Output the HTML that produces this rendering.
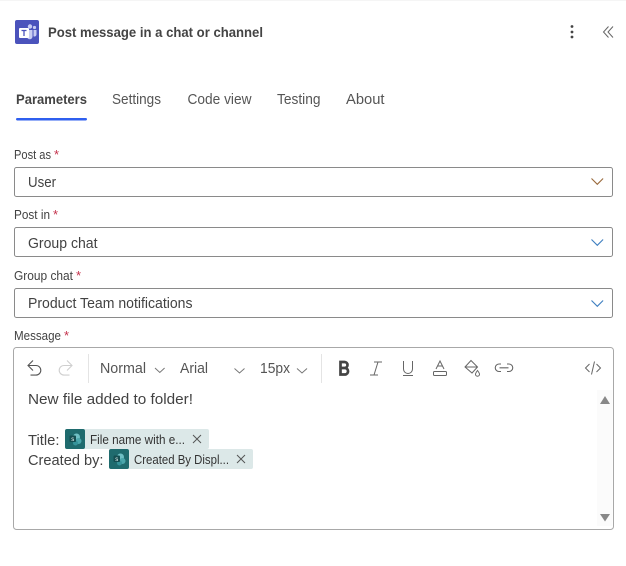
<!DOCTYPE html>
<html><head><meta charset="utf-8"><style>
html,body{margin:0;padding:0;background:#fff;width:626px;height:566px;overflow:hidden}
svg{display:block}
text{font-family:"Liberation Sans",sans-serif;fill:#424242;font-size:15px}
.l{font-size:13px;fill:#424242}.r{font-size:13px;fill:#c4314b}
.t{fill:#555}.b{font-weight:bold}
.c{font-size:12.500px;fill:#333}
</style></head><body>
<svg width="626" height="566" viewBox="0 0 626 566" xmlns="http://www.w3.org/2000/svg">
<rect width="626" height="1" fill="#f5f5f5"/>
<rect x="15" y="20" width="24" height="24" rx="2" fill="#4b53bc"/>
<g fill="#c9cdf2"><circle cx="30" cy="26.500" r="2.200"/><circle cx="34.500" cy="27.500" r="1.600"/><path d="M27 30h5.500v6.500a2.700 2.700 0 0 1-5.500 0zM33.500 30h3v4.500a2 2 0 0 1-3 1.700z"/></g>
<rect x="19" y="28" width="10" height="10" rx="1" fill="#fff"/>
<path d="M21.500 30.500h5M24 30.500v5.500" stroke="#4b53bc" stroke-width="1.300" fill="none"/>
<text x="48" y="37" class="b" style="font-size:14px;fill:#444" textLength="215" lengthAdjust="spacingAndGlyphs">Post message in a chat or channel</text>
<g fill="#444"><circle cx="572" cy="26.500" r="1.400"/><circle cx="572" cy="32" r="1.400"/><circle cx="572" cy="37" r="1.400"/></g>
<path d="M608.500 26.500L603.500 32l5 5.500M613 26.500L608 32l5 5.500" fill="none" stroke="#666" stroke-width="1"/>

<text x="16" y="104" class="b" style="font-size:14px;fill:#444" textLength="71" lengthAdjust="spacingAndGlyphs">Parameters</text>
<text x="112" y="104" class="t" textLength="49" lengthAdjust="spacingAndGlyphs">Settings</text>
<text x="187.500" y="104" class="t" textLength="64" lengthAdjust="spacingAndGlyphs">Code view</text>
<text x="277" y="104" class="t" textLength="43.500" lengthAdjust="spacingAndGlyphs">Testing</text>
<text x="346" y="104" class="t" textLength="38.500" lengthAdjust="spacingAndGlyphs">About</text>
<rect x="16" y="118" width="71" height="2.500" rx="1.200" fill="#2f5fef"/>

<text x="14" y="159" class="l" textLength="37" lengthAdjust="spacingAndGlyphs">Post as</text><text x="54" y="159" class="r">*</text>
<rect x="14.500" y="167.500" width="598" height="29" rx="2" fill="#fff" stroke="#8a8a8a"/>
<text x="28" y="187" textLength="28" lengthAdjust="spacingAndGlyphs">User</text>
<path d="M591.500 178.500l5.800 5.800 5.800-5.800" fill="none" stroke="#9a6a3c" stroke-width="1.100"/>

<text x="14" y="219" class="l" textLength="36" lengthAdjust="spacingAndGlyphs">Post in</text><text x="53" y="219" class="r">*</text>
<rect x="14.500" y="227.500" width="598" height="29" rx="2" fill="#fff" stroke="#8a8a8a"/>
<text x="28" y="248" textLength="69.500" lengthAdjust="spacingAndGlyphs">Group chat</text>
<path d="M591.500 239.500l5.800 5.800 5.800-5.800" fill="none" stroke="#3f7fc0" stroke-width="1.100"/>

<text x="14" y="280" class="l" textLength="59" lengthAdjust="spacingAndGlyphs">Group chat</text><text x="76" y="280" class="r">*</text>
<rect x="14.500" y="288.500" width="598" height="29" rx="2" fill="#fff" stroke="#8a8a8a"/>
<text x="28" y="308" textLength="164.500" lengthAdjust="spacingAndGlyphs">Product Team notifications</text>
<path d="M591.500 300.500l5.800 5.800 5.800-5.800" fill="none" stroke="#3f7fc0" stroke-width="1.100"/>

<text x="14" y="340" class="l" textLength="47" lengthAdjust="spacingAndGlyphs">Message</text><text x="64" y="340" class="r">*</text>
<rect x="13.500" y="347.500" width="600" height="182" rx="3" fill="#fff" stroke="#a8a8a8"/>
<rect x="597" y="390" width="15.500" height="136" fill="#fbfbfb"/>

<path d="M33 360.500l-5 5 5 5M28 365.500h8a4.800 4.800 0 0 1 0 9.600l-5.500 0" fill="none" stroke="#555" stroke-width="1.100"/>
<path d="M67 360.500l5 5-5 5M72 365.500h-8a4.800 4.800 0 0 0 0 9.600l5.500 0" fill="none" stroke="#cfcfcf" stroke-width="1.100"/>
<rect x="88" y="354" width="1" height="29" fill="#e4e4e4"/>
<text x="100" y="373" class="t" textLength="46" lengthAdjust="spacingAndGlyphs">Normal</text>
<path d="M155 368l4.800 4.500 4.800-4.500M234.500 368.500l5 4.500 5-4.500M297 368.500l5 4.500 5-4.500" fill="none" stroke="#777" stroke-width="1"/>
<text x="180" y="373" class="t" textLength="28" lengthAdjust="spacingAndGlyphs">Arial</text>
<text x="260" y="373" class="t" textLength="30" lengthAdjust="spacingAndGlyphs">15px</text>
<rect x="321" y="354" width="1" height="29" fill="#e4e4e4"/>

<path d="M340.500 362h4a3 3 0 0 1 0 6h-4zM340.500 368h4.800a3.300 3.300 0 0 1 0 6.500h-4.800z" fill="none" stroke="#444" stroke-width="2.700"/>
<path d="M374 362h8M370 375h8M378 362l-4 13" fill="none" stroke="#666" stroke-width="1"/>
<path d="M403.500 361v8a4.500 4.500 0 0 0 9 0v-8M403 375.500h10" fill="none" stroke="#666" stroke-width="1"/>
<path d="M436 369l4-8 4 8M437.500 366h5" fill="none" stroke="#666" stroke-width="1"/>
<rect x="433.500" y="371.500" width="13" height="4" rx="1" fill="none" stroke="#666" stroke-width="1"/>
<path d="M471 360.500l6.500 6.500-5.500 6-7-6zM465 367h12.500" fill="none" stroke="#666" stroke-width="1"/>
<path d="M477.500 370.500c-1.500 2-2 2.800-2 3.700a2 2 0 0 0 4 0c0-.9-.5-1.700-2-3.700z" fill="none" stroke="#666" stroke-width="1"/>
<path d="M501 364h-2a3.700 3.700 0 0 0 0 7.500h2M507 364h2a3.700 3.700 0 0 1 0 7.500h-2M499.500 367.800h9" fill="none" stroke="#666" stroke-width="1.100"/>
<path d="M589.500 364l-4 4 4 4M596.500 364l4 4-4 4M594.500 361.500l-3 13" fill="none" stroke="#666" stroke-width="1"/>

<path d="M605 396l5 8h-10z" fill="#888"/>
<path d="M600 514h10l-5 7.500z" fill="#888"/>

<text x="28" y="404" textLength="165" lengthAdjust="spacingAndGlyphs">New file added to folder!</text>
<text x="28" y="445" textLength="31.500" lengthAdjust="spacingAndGlyphs">Title:</text>
<text x="28" y="465" textLength="75.500" lengthAdjust="spacingAndGlyphs">Created by:</text>

<rect x="65" y="429" width="144" height="20" rx="2" fill="#dce8e8"/>
<rect x="65" y="429" width="20" height="20" rx="2" fill="#1f6b6e"/>
<g><circle cx="76.500" cy="437" r="3.500" fill="#6fbfc4"/><circle cx="78.500" cy="441" r="3" fill="#4aa6ab"/><circle cx="75.500" cy="443" r="2.500" fill="#36939a"/></g>
<rect x="69.500" y="435.500" width="6.500" height="6.500" rx="1" fill="#144f52"/>
<text x="71.200" y="441" style="font-size:6px;fill:#fff">s</text>
<text x="90" y="444" class="c" textLength="95" lengthAdjust="spacingAndGlyphs">File name with e...</text>
<path d="M193 435l8 8M201 435l-8 8" fill="none" stroke="#555" stroke-width="1"/>

<rect x="109" y="449" width="144" height="20" rx="2" fill="#dce8e8"/>
<rect x="109" y="449" width="20" height="20" rx="2" fill="#1f6b6e"/>
<g><circle cx="120.500" cy="457" r="3.500" fill="#6fbfc4"/><circle cx="122.500" cy="461" r="3" fill="#4aa6ab"/><circle cx="119.500" cy="463" r="2.500" fill="#36939a"/></g>
<rect x="113.500" y="455.500" width="6.500" height="6.500" rx="1" fill="#144f52"/>
<text x="115.200" y="461" style="font-size:6px;fill:#fff">s</text>
<text x="134" y="464" class="c" textLength="95" lengthAdjust="spacingAndGlyphs">Created By Displ...</text>
<path d="M237 455l8 8M245 455l-8 8" fill="none" stroke="#555" stroke-width="1"/>
</svg>
</body></html>
